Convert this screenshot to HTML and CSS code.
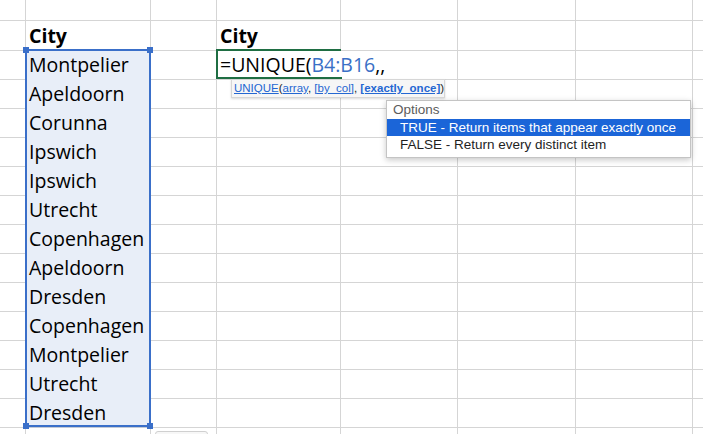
FILE: index.html
```html
<!DOCTYPE html>
<html>
<head>
<meta charset="utf-8">
<link rel="stylesheet" href="styles.css">
</head>
<body>
<div class="sheet">
  <div class="row head"><div class="c"></div><div class="c"></div><div class="c"></div><div class="c"></div><div class="c"></div><div class="c"></div><div class="c"></div><div class="c"></div></div>
  <div class="row"><div class="c"></div><div class="c b">City</div><div class="c"></div><div class="c b">City</div><div class="c"></div><div class="c"></div><div class="c"></div><div class="c"></div></div>
  <div class="row"><div class="c"></div><div class="c sel">Montpelier</div><div class="c"></div><div class="c active">=UNIQUE(<span class="ref">B4:B16</span>,,<span class="fill"></span></div><div class="c"></div><div class="c"></div><div class="c"></div><div class="c"></div></div>
  <div class="row"><div class="c"></div><div class="c sel">Apeldoorn</div><div class="c"></div><div class="c"></div><div class="c"></div><div class="c"></div><div class="c"></div><div class="c"></div></div>
  <div class="row"><div class="c"></div><div class="c sel">Corunna</div><div class="c"></div><div class="c"></div><div class="c"></div><div class="c"></div><div class="c"></div><div class="c"></div></div>
  <div class="row"><div class="c"></div><div class="c sel">Ipswich</div><div class="c"></div><div class="c"></div><div class="c"></div><div class="c"></div><div class="c"></div><div class="c"></div></div>
  <div class="row"><div class="c"></div><div class="c sel">Ipswich</div><div class="c"></div><div class="c"></div><div class="c"></div><div class="c"></div><div class="c"></div><div class="c"></div></div>
  <div class="row"><div class="c"></div><div class="c sel">Utrecht</div><div class="c"></div><div class="c"></div><div class="c"></div><div class="c"></div><div class="c"></div><div class="c"></div></div>
  <div class="row"><div class="c"></div><div class="c sel">Copenhagen</div><div class="c"></div><div class="c"></div><div class="c"></div><div class="c"></div><div class="c"></div><div class="c"></div></div>
  <div class="row"><div class="c"></div><div class="c sel">Apeldoorn</div><div class="c"></div><div class="c"></div><div class="c"></div><div class="c"></div><div class="c"></div><div class="c"></div></div>
  <div class="row"><div class="c"></div><div class="c sel">Dresden</div><div class="c"></div><div class="c"></div><div class="c"></div><div class="c"></div><div class="c"></div><div class="c"></div></div>
  <div class="row"><div class="c"></div><div class="c sel">Copenhagen</div><div class="c"></div><div class="c"></div><div class="c"></div><div class="c"></div><div class="c"></div><div class="c"></div></div>
  <div class="row"><div class="c"></div><div class="c sel">Montpelier</div><div class="c"></div><div class="c"></div><div class="c"></div><div class="c"></div><div class="c"></div><div class="c"></div></div>
  <div class="row"><div class="c"></div><div class="c sel">Utrecht</div><div class="c"></div><div class="c"></div><div class="c"></div><div class="c"></div><div class="c"></div><div class="c"></div></div>
  <div class="row"><div class="c"></div><div class="c sel">Dresden</div><div class="c"></div><div class="c"></div><div class="c"></div><div class="c"></div><div class="c"></div><div class="c"></div></div>
  <div class="row"><div class="c"></div><div class="c"></div><div class="c"></div><div class="c"></div><div class="c"></div><div class="c"></div><div class="c"></div><div class="c"></div></div>

  <div class="selection">
    <span class="hd tl"></span><span class="hd tr"></span><span class="hd bl"></span><span class="hd br"></span>
  </div>

  <div class="tip"><a>UNIQUE</a>(<a>array</a>, <a>[by_col]</a>, <a class="strong">[exactly_once]</a>)</div>

  <div class="menu">
    <div class="mhead">Options</div>
    <div class="mitem on">TRUE - Return items that appear exactly once</div>
    <div class="mitem">FALSE - Return every distinct item</div>
  </div>

  <div class="pastebtn"></div>
</div>
</body>
</html>
```

FILE: styles.css
```css
html, body {
  margin: 0;
  padding: 0;
  background: #fff;
  overflow: hidden;
}
.sheet {
  position: relative;
  width: 703px;
  height: 434px;
  overflow: hidden;
  font-family: "Open Sans", Lato, sans-serif;
  font-size: 19.5px;
  color: #000;
}
.row {
  display: grid;
  grid-template-columns: 26px 125px 66px 124px 117px 118px 117px 60px;
  height: 29px;
}
.row.head {
  height: 21px;
}
.c {
  box-sizing: border-box;
  border-right: 1px solid #d5d5d5;
  border-bottom: 1px solid #d5d5d5;
  padding: 0 0 0 3px;
  white-space: nowrap;
  line-height: 29px;
  position: relative;
}
.c.b {
  font-weight: bold;
}
.c.sel {
  background: #e8eef8;
  border-bottom-color: #c4cad4;
  border-right-color: transparent;
}
.c.active {
  overflow: visible;
  z-index: 2;
  border-right-color: transparent;
}
.c.active::after {
  content: "";
  position: absolute;
  left: -1px;
  top: -1px;
  right: -1px;
  bottom: 0;
  border: 2px solid #1f6e43;
  border-right: none;
  pointer-events: none;
}
.fill {
  position: absolute;
  right: -2px;
  bottom: -3px;
  width: 5px;
  height: 5px;
  background: #1f6e43;
  z-index: 3;
}
.ref {
  color: #3a6fc6;
}
.selection {
  position: absolute;
  left: 25px;
  top: 49px;
  width: 126px;
  height: 378px;
  box-sizing: border-box;
  border: 2px solid #3a6fc9;
  z-index: 4;
}
.hd {
  position: absolute;
  width: 6px;
  height: 6px;
  background: #3a6fc9;
}
.hd.tl { left: -4px; top: -4px; }
.hd.tr { right: -4px; top: -4px; }
.hd.bl { left: -4px; bottom: -4px; }
.hd.br { right: -4px; bottom: -4px; }

.tip {
  position: absolute;
  left: 231px;
  top: 79px;
  width: 214px;
  height: 19px;
  box-sizing: border-box;
  background: #f6f6f6;
  border: 1px solid #d6d6d6;
  box-shadow: 0 1px 2px rgba(0,0,0,0.15);
  font-family: "Liberation Sans", Arial, sans-serif;
  font-size: 11.5px;
  line-height: 17px;
  padding-left: 2px;
  color: #222;
  white-space: nowrap;
  z-index: 6;
}
.tip a {
  color: #2467d2;
  text-decoration: underline;
}
.tip a.strong {
  font-weight: bold;
}

.menu {
  position: absolute;
  left: 386px;
  top: 100px;
  width: 305px;
  height: 58px;
  box-sizing: border-box;
  background: #fff;
  border: 1px solid #c4c4c4;
  box-shadow: 0 2px 6px rgba(0,0,0,0.22);
  font-family: "Liberation Sans", Arial, sans-serif;
  font-size: 13.5px;
  z-index: 5;
}
.mhead {
  color: #5c5c5c;
  height: 18px;
  line-height: 17px;
  padding-left: 6px;
}
.mitem {
  height: 17px;
  line-height: 17px;
  padding-left: 13px;
  color: #1e1e1e;
}
.mitem.on {
  background: #1b65d8;
  color: #fff;
}
.pastebtn {
  position: absolute;
  left: 155px;
  top: 431px;
  width: 53px;
  height: 20px;
  box-sizing: border-box;
  border: 1px solid #d0d0d0;
  border-radius: 3px;
  background: #f7f7f7;
}
```
